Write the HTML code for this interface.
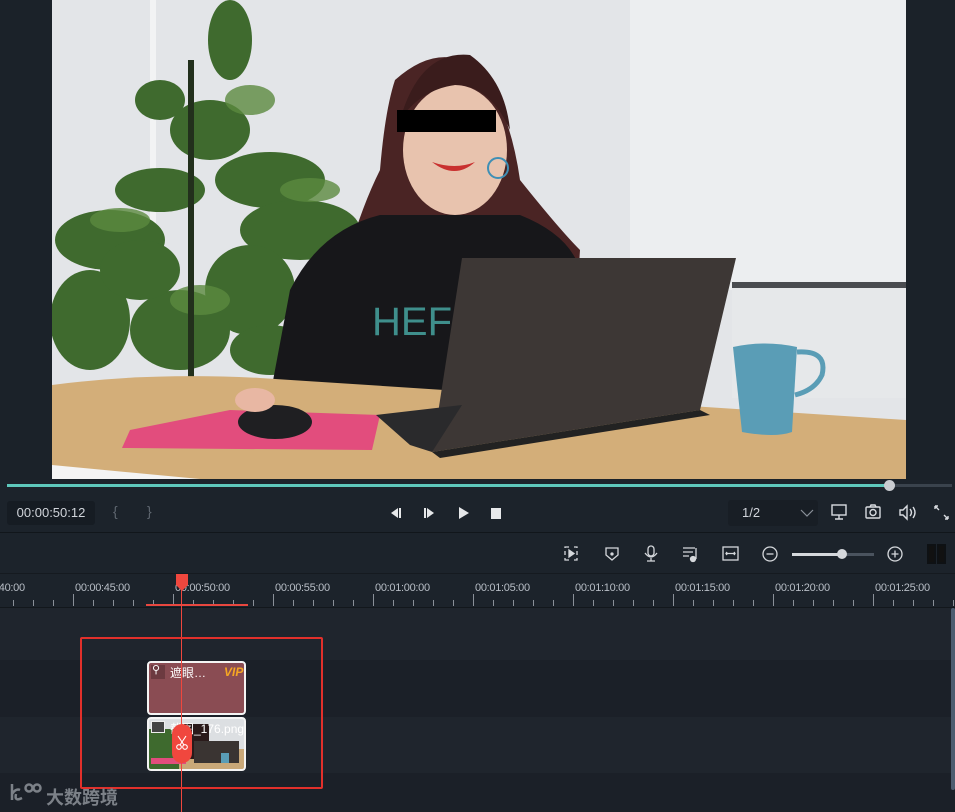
<!DOCTYPE html>
<html><head><meta charset="utf-8"><style>
*{margin:0;padding:0;box-sizing:border-box}
body{width:955px;height:812px;overflow:hidden;background:#1c232b;font-family:"Liberation Sans","Noto Sans CJK SC",sans-serif;position:relative;color:#c8ccd2}
.a{position:absolute}
.tl{font-size:11px;color:#b8bec6;letter-spacing:-0.3px}
</style></head><body>
<!-- video -->
<div class="a" style="left:0;top:0;width:955px;height:480px;background:#1b2229"></div>
<svg class="a" style="left:52px;top:0" width="854" height="479" viewBox="52 0 854 479">
<rect x="52" y="0" width="854" height="479" fill="#e3e5e8"/>
<rect x="150" y="0" width="6" height="230" fill="#f2f3f4"/>
<rect x="630" y="0" width="276" height="290" fill="#eceef0"/>
<rect x="732" y="282" width="174" height="6" fill="#4a4c50"/>
<rect x="732" y="288" width="174" height="110" fill="#e6e8ea"/>
<!-- plant -->
<g fill="#3f6a2e">
<ellipse cx="110" cy="240" rx="55" ry="30"/><ellipse cx="90" cy="320" rx="40" ry="50"/>
<ellipse cx="160" cy="190" rx="45" ry="22"/><ellipse cx="210" cy="130" rx="40" ry="30"/>
<ellipse cx="230" cy="40" rx="22" ry="40"/><ellipse cx="270" cy="180" rx="55" ry="28"/>
<ellipse cx="300" cy="230" rx="60" ry="30"/><ellipse cx="250" cy="290" rx="45" ry="45"/>
<ellipse cx="180" cy="330" rx="50" ry="40"/><ellipse cx="140" cy="270" rx="40" ry="30"/>
<ellipse cx="320" cy="300" rx="35" ry="25"/><ellipse cx="270" cy="350" rx="40" ry="25"/>
<ellipse cx="160" cy="100" rx="25" ry="20"/>
</g>
<g fill="#5b8a3f" opacity=".8"><ellipse cx="120" cy="220" rx="30" ry="12"/><ellipse cx="250" cy="100" rx="25" ry="15"/><ellipse cx="200" cy="300" rx="30" ry="15"/><ellipse cx="310" cy="190" rx="30" ry="12"/></g>
<rect x="188" y="60" width="6" height="320" fill="#22301c"/>
<!-- hair & body -->
<path d="M395 80 Q440 40 480 70 Q510 110 520 180 Q560 230 580 250 L575 330 L330 330 Q350 230 380 170 Q385 110 395 80Z" fill="#4a2424"/>
<path d="M290 290 Q320 230 380 215 L520 215 Q570 235 580 270 L590 450 L260 450Z" fill="#17171a"/>
<ellipse cx="455" cy="150" rx="52" ry="65" fill="#e8c3ae"/>
<path d="M400 120 Q420 50 470 55 Q505 80 510 130 Q490 85 455 85 Q420 90 400 120Z" fill="#3a1c1c"/>
<rect x="397" y="110" width="99" height="22" fill="#000"/>
<path d="M432 162 Q455 180 475 162 Q455 170 432 162Z" fill="#c9302f"/>
<circle cx="498" cy="168" r="10" fill="none" stroke="#3f8fb5" stroke-width="2"/>
<text x="372" y="335" font-size="40" fill="#3f8f8c" font-family="Liberation Sans">HEFF</text>
<!-- desk -->
<path d="M52 385 Q150 372 260 378 L906 420 L906 479 L52 479Z" fill="#d3ae79"/>
<path d="M52 465 L200 479 L52 479Z" fill="#f4f4f4"/>
<path d="M130 430 L230 410 L380 415 L372 450 L122 448Z" fill="#e24d7d"/>
<ellipse cx="275" cy="422" rx="37" ry="17" fill="#1f1f22"/>
<ellipse cx="255" cy="400" rx="20" ry="12" fill="#e8b7a3"/>
<!-- laptop -->
<path d="M462 258 L736 258 L700 410 L432 452Z" fill="#3d3735"/>
<path d="M376 415 L462 405 L432 452 L410 445Z" fill="#2a2a2c"/>
<path d="M432 452 L700 410 L710 415 L440 458Z" fill="#222"/>
<!-- mug -->
<path d="M733 347 Q765 340 797 347 L792 432 Q775 438 742 432Z" fill="#5a9db6"/>
<path d="M797 352 Q828 350 822 375 Q815 390 795 395" fill="none" stroke="#5a9db6" stroke-width="5"/>
</svg>
<!-- progress -->
<div class="a" style="left:7px;top:484px;width:883px;height:3px;background:#5ec8bc"></div>
<div class="a" style="left:890px;top:484px;width:62px;height:3px;background:#3a434d"></div>
<div class="a" style="left:884px;top:480px;width:11px;height:11px;border-radius:50%;background:#c9ccd0"></div>
<!-- controls -->
<div class="a" style="left:7px;top:501px;width:88px;height:24px;background:#161c23;border-radius:3px;font-size:13px;color:#d0d4da;line-height:24px;text-align:center">00:00:50:12</div>
<div class="a" style="left:113px;top:503px;font-size:14px;color:#5f6770">{</div>
<div class="a" style="left:147px;top:503px;font-size:14px;color:#5f6770">}</div>
<svg class="a" style="left:385px;top:505px" width="120" height="16" fill="#e6e8ea">
<path d="M13 3 L6 8 L13 13Z"/><rect x="14" y="3" width="2" height="10"/>
<rect x="39" y="3" width="2" height="10"/><path d="M42 3 L49 8 L42 13Z"/>
<path d="M74 2 L84 8 L74 14Z"/><rect x="106" y="3" width="10" height="11"/>
</svg>
<div class="a" style="left:728px;top:500px;width:90px;height:26px;background:#181e25;border-radius:3px;font-size:13px;color:#d0d4da;line-height:26px;padding-left:14px">1/2</div>
<svg class="a" style="left:800px;top:508px" width="14" height="10"><path d="M1 2 L7 8 L13 2" stroke="#8a9099" fill="none" stroke-width="1.2"/></svg>
<svg class="a" style="left:830px;top:503px" width="120" height="20" fill="none" stroke="#d8dbe0" stroke-width="1.4">
<rect x="2" y="2" width="14" height="10"/><path d="M9 12 V16 M5 16 H13"/>
<rect x="36" y="4" width="14" height="11" rx="1"/><circle cx="43" cy="9.5" r="3"/><path d="M40 4 L41 2 H45 L46 4"/>
<path d="M70 7 H73 L77 3 V16 L73 12 H70Z"/><path d="M80 6 Q83 9.5 80 13 M83 4 Q87 9.5 83 15"/>
<path d="M105 3 L109 7 M105 3 V6 M105 3 H108 M118 16 L114 12 M118 16 V13 M118 16 H115"/>
</svg>
<div class="a" style="left:0;top:532px;width:955px;height:1px;background:#11161b"></div>
<!-- toolbar icons -->
<svg class="a" style="left:560px;top:543px" width="395" height="22" fill="none" stroke="#d5d8dc" stroke-width="1.3">
<path d="M5 5 V4 H9 M14 4 H17 V5 M5 15 V17 H9 M14 17 H17 V15 M5 8 V12 M17 8 V12"/><path d="M9 7 L14 10.5 L9 14Z" fill="#d5d8dc"/>
<path d="M46 5 H58 V12 L52 17 L46 12Z"/><circle cx="52" cy="11" r="1" fill="#d5d8dc"/>
<rect x="88" y="3" width="6" height="10" rx="3"/><path d="M85 10 Q91 18 97 10 M91 15 V18 M87 18 H95"/>
<path d="M123 5 H135 M123 9 H133 M123 13 H129 M136 5 V16"/><circle cx="133" cy="16" r="2.5" fill="#d5d8dc"/>
<rect x="163" y="4" width="15" height="13"/><path d="M166 10.5 H175 M167 9 L166 10.5 L167 12 M174 9 L175 10.5 L174 12"/>
<circle cx="210" cy="11" r="7"/><path d="M206.5 11 H213.5"/>
<circle cx="335" cy="11" r="7"/><path d="M331.5 11 H338.5 M335 7.5 V14.5"/>
</svg>
<div class="a" style="left:792px;top:553px;width:50px;height:3px;background:#d5d8dc"></div>
<div class="a" style="left:842px;top:553px;width:32px;height:3px;background:#4a535e"></div>
<div class="a" style="left:837px;top:549px;width:10px;height:10px;border-radius:50%;background:#d5d8dc"></div>
<div class="a" style="left:927px;top:544px;width:9px;height:20px;border:2px solid #0e1114;background:#111"></div>
<div class="a" style="left:937px;top:544px;width:9px;height:20px;border:2px solid #0e1114;background:#111"></div>
<div class="a" style="left:0;top:573px;width:955px;height:1px;background:#151a20"></div>
<!-- ruler -->
<div class="a" style="left:0;top:574px;width:955px;height:33px;background:#1c232b"></div>
<div class="a tl" style="left:-4px;top:582px">:40:00</div>
<div class="a tl" style="left:75px;top:582px">00:00:45:00</div>
<div class="a tl" style="left:175px;top:582px">00:00:50:00</div>
<div class="a tl" style="left:275px;top:582px">00:00:55:00</div>
<div class="a tl" style="left:375px;top:582px">00:01:00:00</div>
<div class="a tl" style="left:475px;top:582px">00:01:05:00</div>
<div class="a tl" style="left:575px;top:582px">00:01:10:00</div>
<div class="a tl" style="left:675px;top:582px">00:01:15:00</div>
<div class="a tl" style="left:775px;top:582px">00:01:20:00</div>
<div class="a tl" style="left:875px;top:582px">00:01:25:00</div>
<svg class="a" style="left:0;top:594px" width="955" height="14" stroke="#8a9099" stroke-width="1">
<g id="t"><path d="M-26.5 0 V12 M-6.5 6 V12 M13.5 6 V12 M33.5 6 V12 M53.5 6 V12"/></g>
<use href="#t" x="100"/><use href="#t" x="200"/><use href="#t" x="300"/><use href="#t" x="400"/><use href="#t" x="500"/><use href="#t" x="600"/><use href="#t" x="700"/><use href="#t" x="800"/><use href="#t" x="900"/>
</svg>
<div class="a" style="left:146px;top:604px;width:102px;height:2px;background:#e8473f"></div>
<div class="a" style="left:0;top:607px;width:955px;height:1px;background:#12171c"></div>
<!-- tracks -->
<div class="a" style="left:0;top:608px;width:955px;height:52px;background:#1f252d"></div>
<div class="a" style="left:0;top:660px;width:955px;height:57px;background:#1b2028"></div>
<div class="a" style="left:0;top:717px;width:955px;height:56px;background:#1f252d"></div>
<div class="a" style="left:0;top:773px;width:955px;height:39px;background:#1b2028"></div>
<div class="a" style="left:951px;top:608px;width:4px;height:182px;background:#4d5d70;border-radius:2px"></div>
<!-- clips -->
<div class="a" style="left:147px;top:661px;width:99px;height:54px;background:#8a4c53;border:2px solid #f4f4f4;border-radius:4px"></div>
<div class="a" style="left:151px;top:665px;width:14px;height:14px;background:#6c3a40"></div>
<div class="a" style="left:152px;top:663px;font-size:11px;color:#fff">⚲</div>
<div class="a" style="left:170px;top:664px;font-size:12px;color:#fff">遮眼…</div>
<div class="a" style="left:224px;top:665px;font-size:12px;color:#f5a623;font-weight:bold;font-style:italic">VIP</div>
<div class="a" style="left:147px;top:717px;width:99px;height:54px;border:2px solid #f4f4f4;border-radius:4px;overflow:hidden;background:linear-gradient(#dcdfe2 0,#dcdfe2 60%,#c9a878 60%)">
<div class="a" style="left:0;top:10px;width:30px;height:40px;background:#3e6a2e"></div>
<div class="a" style="left:35px;top:5px;width:25px;height:35px;background:#2a1a1a"></div>
<div class="a" style="left:45px;top:22px;width:45px;height:22px;background:#3a3432"></div>
<div class="a" style="left:72px;top:34px;width:8px;height:10px;background:#5a9db6"></div>
<div class="a" style="left:2px;top:39px;width:35px;height:6px;background:#e24d7d"></div>
</div>
<div class="a" style="left:151px;top:721px;width:14px;height:12px;border:1px solid #eee;background:#444"></div>
<div class="a" style="left:170px;top:720px;font-size:12px;color:#fff">截图_176.png</div>
<!-- playhead -->
<div class="a" style="left:181px;top:580px;width:1px;height:232px;background:#f0473e"></div>
<svg class="a" style="left:175px;top:574px" width="14" height="18"><path d="M1 0 H13 V11 L7 17 L1 11Z" fill="#f0473e"/></svg>
<div class="a" style="left:172px;top:724px;width:20px;height:39px;border-radius:10px;background:#f0473e"></div>
<svg class="a" style="left:174px;top:735px" width="16" height="16" fill="none" stroke="#fff" stroke-width="1.1"><path d="M4 1 L10 10 M12 1 L6 10"/><circle cx="5" cy="12" r="2.3"/><circle cx="11" cy="12" r="2.3"/></svg>
<!-- red box -->
<div class="a" style="left:80px;top:637px;width:243px;height:152px;border:2px solid #e2302b;border-radius:2px"></div>
<!-- watermark -->
<svg class="a" style="left:8px;top:782px" width="36" height="22" fill="none" stroke="#7c8188" stroke-width="2.5"><path d="M4 2 V18 M4 12 Q8 6 12 8 M14 16 Q6 20 8 12"/><circle cx="21" cy="6" r="3.5"/><circle cx="29" cy="6" r="3.5"/></svg>
<div class="a" style="left:46px;top:784px;font-size:18px;color:#7c8188;font-weight:bold;letter-spacing:0">大数跨境</div>
</body></html>
